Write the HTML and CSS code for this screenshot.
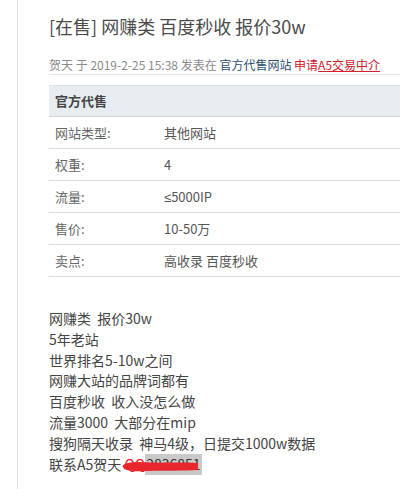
FILE: index.html
```html
<!DOCTYPE html>
<html lang="zh">
<head>
<meta charset="utf-8">
<link rel="stylesheet" href="styles.css">
</head>
<body>
<div class="page">
  <h1 class="title">[在售] 网赚类 百度秒收 报价30w</h1>
  <div class="meta">贺天 于 2019-2-25 15:38 发表在 <span class="forum">官方代售网站</span> <span class="apply">申请<u>A5交易中介</u></span></div>
  <div class="table">
    <div class="thead">官方代售</div>
    <div class="row"><span class="k">网站类型:</span><span class="v">其他网站</span></div>
    <div class="row"><span class="k">权重:</span><span class="v">4</span></div>
    <div class="row"><span class="k">流量:</span><span class="v"><span class="le">≤</span>5000IP</span></div>
    <div class="row"><span class="k">售价:</span><span class="v">10-50万</span></div>
    <div class="row"><span class="k">卖点:</span><span class="v">高收录 百度秒收</span></div>
  </div>
  <div class="body">
    <p>网赚类&nbsp;&nbsp;报价30w</p>
    <p>5年老站</p>
    <p>世界排名5-10w之间</p>
    <p>网赚大站的品牌词都有</p>
    <p>百度秒收&nbsp;&nbsp;收入没怎么做</p>
    <p>流量3000&nbsp;&nbsp;大部分在mip</p>
    <p>搜狗隔天收录&nbsp;&nbsp;神马4级，日提交1000w数据</p>
    <p>联系A5贺天 <span class="qq"><span class="qqlead">QQ</span><span class="qqnum">2836851</span><svg class="scribble" width="78" height="14" viewBox="0 0 78 14"><path d="M1 6 C8 2, 18 3, 30 3.5 S56 3, 76 4 L76 11 C62 12, 44 11.5, 26 12 S8 12, 2 10 Z" fill="#e8262b"/><path d="M1 8 q3 -3 6 0 q3 -3 6 0 q3 -3 6 0" stroke="#e8262b" stroke-width="2" fill="none"/></svg></span></p>
  </div>
</div>
</body>
</html>
```
FILE: styles.css
```css
html, body {
  margin: 0;
  padding: 0;
  background: #fff;
}
body {
  font-family: "Noto Sans CJK SC", "Liberation Sans", sans-serif;
  color: #444;
}
.page {
  margin-left: 17px;
  border-left: 1px solid #e4e4e4;
  padding-left: 31px;
  min-height: 489px;
  box-sizing: border-box;
  overflow: hidden;
}
.title {
  margin: 0;
  padding-top: 14px;
  font-size: 18px;
  line-height: 24px;
  font-weight: normal;
  color: #4a4a4a;
  white-space: nowrap;
}
.meta {
  margin-top: 19px;
  font-size: 12px;
  line-height: 16px;
  color: #8a8a8a;
  padding-bottom: 1px;
  border-bottom: 1px solid #e6e6e6;
  white-space: nowrap;
}
.forum { color: #2c4d6e; }
.apply { color: #d0202a; }
.apply u { text-decoration-color: #d0202a; }
.table {
  margin-top: 10px;
  font-size: 13px;
  color: #555;
}
.thead {
  height: 30px;
  line-height: 30px;
  background: #e7ecf1;
  border-top: 1px solid #dde2e7;
  border-bottom: 1px solid #d8d8d8;
  padding-left: 6px;
  font-weight: bold;
  color: #444;
}
.row {
  display: flex;
  height: 31px;
  line-height: 31px;
  border-bottom: 1px solid #dcdcdc;
  padding-left: 6px;
}
.k { width: 109px; color: #666; }
.v { color: #555; }
.le { font-family: "Liberation Sans", sans-serif; }
.body {
  margin-top: 31px;
  font-size: 14px;
  line-height: 20.8px;
  color: #444;
}
.body p { margin: 0; white-space: nowrap; }
.qq {
  position: relative;
  display: inline-block;
  line-height: 21px;
}
.qqlead { color: #e8262b; }
.qqnum {
  display: inline-block;
  background: #c9c9c9;
  color: #333;
  padding: 0 1px;
}
.scribble {
  position: absolute;
  left: -2px;
  top: 5px;
}
```
